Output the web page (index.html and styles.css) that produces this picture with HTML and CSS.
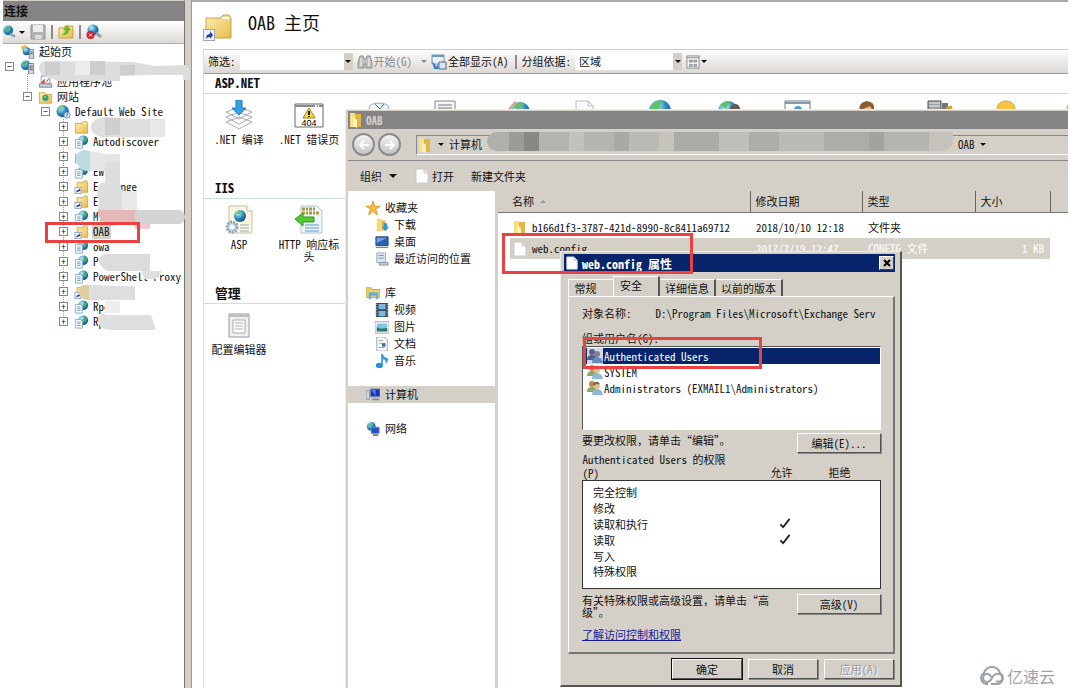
FILE: index.html
```html
<!DOCTYPE html>
<html lang="zh-CN">
<head>
<meta charset="utf-8">
<title>OAB 主页</title>
<link rel="stylesheet" href="styles.css">
</head>
<body>
<svg class="defs" aria-hidden="true">
  <defs>
    <linearGradient id="gold" x1="0" y1="0" x2="1" y2="1"><stop offset="0" stop-color="#fdeeb0"/><stop offset="1" stop-color="#e9bc4c"/></linearGradient>
    <radialGradient id="earth" cx=".35" cy=".3" r=".8"><stop offset="0" stop-color="#c5eefa"/><stop offset=".5" stop-color="#2e8fc4"/><stop offset="1" stop-color="#0f4478"/></radialGradient>
  </defs>
  <symbol id="folder" viewBox="0 0 16 16"><path d="M1 4h8l1-2h4l1 2v11H1z" fill="url(#gold)" stroke="#cda348"/><path d="M10 4h4" stroke="#fff"/></symbol>
  <symbol id="folder-link" viewBox="0 0 16 16"><path d="M3 3h7l1-2h3l1 2v11H3z" fill="url(#gold)" stroke="#cda348"/><rect x=".5" y="8.500" width="7" height="7" fill="#f2f4fb" stroke="#9aa3c0"/><path d="M2 14q0-3 3-3V9l2 3-2 1" fill="#2a3f9d"/></symbol>
  <symbol id="app" viewBox="0 0 16 16"><circle cx="10" cy="6" r="5.500" fill="url(#earth)"/><path d="M11 2l3 2-1 4-3-2z" fill="#48b558"/><path d="M1 5h6l2 2v8H1z" fill="#f4f9fc" stroke="#86a9bf"/><path d="M3 8h4M3 10h4M3 12h4" stroke="#6f9cc0"/></symbol>
  <symbol id="server" viewBox="0 0 16 16"><circle cx="6" cy="6" r="5.500" fill="url(#earth)"/><path d="M2 3l4-2 1 3-3 3z" fill="#48b558"/><path d="M9 4h6v12H9z" fill="#cdd5dc" stroke="#6f7d88"/><path d="M10 7h4M10 9h4M10 11h4" stroke="#506070"/></symbol>
  <symbol id="start" viewBox="0 0 16 16"><path d="M0 2l6-2 4 4v6H4z" fill="#e7c04d"/><circle cx="7" cy="7" r="4.500" fill="url(#earth)"/><path d="M10 5h5v11h-5z" fill="#cdd5dc" stroke="#6f7d88"/><path d="M11 8h3M11 10h3" stroke="#506070"/></symbol>
  <symbol id="pool" viewBox="0 0 16 16"><path d="M3 1h10v9H3z" fill="#f3f5fa" stroke="#8b93ab"/><path d="M1 10h14v4H1z" fill="#c7ccd8" stroke="#7d8494"/><path d="M3 9l4-5v5z" fill="#d33"/><path d="M9 8l3-4" stroke="#4a67b5"/></symbol>
  <symbol id="sites" viewBox="0 0 16 16"><path d="M1 3h6l1 2h7v10H1z" fill="url(#gold)" stroke="#cda348"/><circle cx="8" cy="9" r="3.500" fill="#2f9e77"/><path d="M6 8l2-2 1 3z" fill="#a8e07d"/></symbol>
  <symbol id="web" viewBox="0 0 16 16"><circle cx="7" cy="7" r="7" fill="url(#earth)"/><path d="M2 3q3-3 6-2l-2 4-3 2z" fill="#7bd08a"/><circle cx="12" cy="11.500" r="3.500" fill="#dfe9f6" stroke="#5c83b7"/><path d="M12 9v4" stroke="#3463a5"/></symbol>
  <symbol id="connect" viewBox="0 0 16 16"><circle cx="6" cy="6" r="5.500" fill="url(#earth)"/><path d="M2 4l4-3 1 4-3 2z" fill="#48b558"/><path d="M8 10l3 2 3 1" stroke="#8ca6b4" stroke-width="3" fill="none"/></symbol>
  <symbol id="stop" viewBox="0 0 16 16"><circle cx="7" cy="6" r="5.500" fill="url(#earth)"/><path d="M10 9l5 4" stroke="#8ca6b4" stroke-width="3"/><circle cx="4.500" cy="11" r="4" fill="#d3202c"/><path d="M3 9.500l3 3m0-3l-3 3" stroke="#fff"/></symbol>
  <symbol id="save" viewBox="0 0 16 16"><path d="M1 1h14v14H1z" fill="#b5b3b2" stroke="#94928f"/><path d="M3 1h10v7H3z" fill="#eeedec"/><path d="M5 11h7v4H5z" fill="#dddbd9"/></symbol>
  <symbol id="up" viewBox="0 0 16 16"><path d="M1 4h5l1-2h8v12H1z" fill="url(#gold)" stroke="#cda348"/><path d="M3 11q4-1 4-5H5l4-5 4 5h-2q0 6-8 5z" fill="#68b92f"/></symbol>
  <symbol id="exfolder" viewBox="0 0 16 16"><path d="M2 1h5v14H2z" fill="#f8df83"/><path d="M7 2h6v13H7z" fill="#e3b73f"/><path d="M5 5l4 3v8l-4-2z" fill="#fff3b9"/></symbol>
  <symbol id="page" viewBox="0 0 16 16"><path d="M2 1h8l4 4v10H2z" fill="#fff" stroke="#c5c9cf"/><path d="M10 1v4h4" fill="#e9ecef" stroke="#c5c9cf"/></symbol>
  <symbol id="bino" viewBox="0 0 16 16"><path d="M3 2h3l1 3h2l1-3h3l2 7v5H9v-4H7v4H1V9z" fill="#c2c0be" stroke="#8f8d8b"/><path d="M4 4v8M12 4v8" stroke="#f5f5f5"/></symbol>
  <symbol id="showall" viewBox="0 0 16 16"><path d="M1 1h12v9H1z" fill="#e9f2fa" stroke="#7195b8"/><path d="M1 2h12" stroke="#7195b8" stroke-width="2"/><path d="M8 8h7v7H8z" fill="#d7e7f5" stroke="#668"/><path d="M1 7l5 6V9l2 6H3z" fill="#2f83cc"/></symbol>
  <symbol id="grid" viewBox="0 0 16 16"><path d="M1 1h14v14H1z" fill="#f1f1f0" stroke="#85878a"/><path d="M1 3h14" stroke="#85878a"/><path d="M4 6h3v2H4zM9 6h3v2H9zM4 11h3v2H4zM9 11h3v2H9z" fill="#cfd5db" stroke="#7b8188"/></symbol>
  <symbol id="users" viewBox="0 0 16 16"><circle cx="5" cy="4" r="3" fill="#b98a50"/><path d="M0 12q0-5 5-5t5 5z" fill="#8bab62"/><circle cx="10" cy="6" r="3" fill="#e3bf8b"/><path d="M5 15q0-6 5-6t6 6z" fill="#8db9d9"/><path d="M7 5q2-4 5-1" stroke="#7d5a2f" stroke-width="2" fill="none"/></symbol>
  <symbol id="users-sel" viewBox="0 0 16 16"><path d="M0 0h16v16H0z" fill="#d4d8e4"/><circle cx="5" cy="4" r="3" fill="#596080"/><path d="M0 12q0-5 5-5t5 5z" fill="#4f6088"/><circle cx="10" cy="6" r="3" fill="#7e7f98"/><path d="M5 15q0-6 5-6t6 6z" fill="#6688c0"/></symbol>
</svg>

<main class="desktop">
  <aside class="connections">
    <h2 class="pane-title">连接</h2>
    <div class="pane-tools">
      <button class="tool" aria-label="连接到服务器"><svg class="i14"><use href="#connect"/></svg><i class="caret"></i></button>
      <button class="tool" aria-label="保存"><svg class="i16"><use href="#save"/></svg></button>
      <i class="bar"></i>
      <button class="tool" aria-label="向上"><svg class="i16"><use href="#up"/></svg></button>
      <i class="bar"></i>
      <button class="tool" aria-label="断开"><svg class="i16"><use href="#stop"/></svg></button>
    </div>
    <ul class="tree">
      <li class="row"><i class="leaf"></i><svg class="tree-icon"><use href="#start"/></svg><span>起始页</span></li>
      <li><div class="row"><i class="box">−</i><svg class="tree-icon"><use href="#server"/></svg><span></span></div>
        <ul class="level1">
          <li class="row"><i class="leaf"></i><svg class="tree-icon"><use href="#pool"/></svg><span>应用程序池</span></li>
          <li><div class="row"><i class="box">−</i><svg class="tree-icon"><use href="#sites"/></svg><span>网站</span></div>
            <ul class="level2">
              <li><div class="row"><i class="box">−</i><svg class="tree-icon"><use href="#web"/></svg><span>Default Web Site</span></div>
                <ul class="level3">
                  <li class="row"><i class="box">+</i><svg class="tree-icon"><use href="#folder"/></svg></li>
                  <li class="row"><i class="box">+</i><svg class="tree-icon"><use href="#app"/></svg><span>Autodiscover</span></li>
                  <li class="row"><i class="box">+</i><svg class="tree-icon"><use href="#app"/></svg></li>
                  <li class="row"><i class="box">+</i><svg class="tree-icon"><use href="#app"/></svg><span>EW</span></li>
                  <li class="row"><i class="box">+</i><svg class="tree-icon"><use href="#folder-link"/></svg><span>Exchange</span></li>
                  <li class="row"><i class="box">+</i><svg class="tree-icon"><use href="#folder-link"/></svg><span>Ex</span></li>
                  <li class="row"><i class="box">+</i><svg class="tree-icon"><use href="#app"/></svg><span>Mi</span></li>
                  <li class="row"><i class="box">+</i><svg class="tree-icon"><use href="#folder-link"/></svg><span class="current">OAB</span></li>
                  <li class="row"><i class="box">+</i><svg class="tree-icon"><use href="#app"/></svg><span>owa</span></li>
                  <li class="row"><i class="box">+</i><svg class="tree-icon"><use href="#app"/></svg><span>P</span></li>
                  <li class="row"><i class="box">+</i><svg class="tree-icon"><use href="#app"/></svg><span>PowerShell-Proxy</span></li>
                  <li class="row"><i class="box">+</i><svg class="tree-icon"><use href="#folder-link"/></svg></li>
                  <li class="row"><i class="box">+</i><svg class="tree-icon"><use href="#app"/></svg><span>Rpc</span></li>
                  <li class="row"><i class="box">+</i><svg class="tree-icon"><use href="#app"/></svg><span>Rp</span></li>
                </ul>
              </li>
            </ul>
          </li>
        </ul>
      </li>
    </ul>
  </aside>
  <div class="splitter"></div>

  <section class="home">
    <header class="home-head">
      <svg class="i30" viewBox="0 0 30 30"><path d="M3 5h15l2-3h6l2 3v20H3z" fill="url(#gold)" stroke="#cda348"/><path d="M19 5h7" stroke="#fff" stroke-width="2"/><rect x=".5" y="16.500" width="11" height="11" fill="#f2f4fb" stroke="#9aa3c0"/><path d="M3 26q0-5 4-5v-3l3 4-3 4v-2q-3 0-4 2z" fill="#2a3f9d"/></svg>
      <h1>OAB 主页</h1>
    </header>
    <div class="home-body">
      <div class="filter">
        <label for="filter">筛选:</label>
        <span class="combo"><input id="filter" type="text"><button class="drop" aria-label="展开"><i class="caret"></i></button></span>
        <button class="tool muted"><svg class="i16"><use href="#bino"/></svg>开始(G)<i class="caret spaced"></i></button>
        <button class="tool"><svg class="i16"><use href="#showall"/></svg>全部显示(A)</button>
        <i class="bar"></i>
        <label for="group">分组依据:</label>
        <span class="combo group-combo"><select id="group"><option>区域</option></select><i class="drop"><i class="caret"></i></i></span>
        <button class="tool" aria-label="视图"><svg class="i14"><use href="#grid"/></svg><i class="caret"></i></button>
      </div>

      <section class="group">
        <h3>ASP.NET</h3>
        <div class="tiles">
          <a class="tile" href="#"><svg class="i30" viewBox="0 0 30 30"><path d="M2 22l13-5 13 5-13 7zM2 17l13-5 13 5-13 7zM2 12l13-5 13 5-13 7z" fill="#fbfcfd" stroke="#a9adb3"/><path d="M12 0h6v8h4l-7 7-7-7h4z" fill="#36a0e8" stroke="#1d78bd"/></svg>.NET 编译</a>
          <a class="tile" href="#"><svg class="i30" viewBox="0 0 30 30"><path d="M1 4h28v23H1z" fill="#fff" stroke="#666"/><path d="M1 6h28" stroke="#889" stroke-width="2" stroke-dasharray="20 2 1 1"/><path d="M15 8l6 10H9z" fill="#fbd928" stroke="#9c8416"/><path d="M15 11v4m0 1v1" stroke="#222" stroke-width="2"/><text x="15" y="26" text-anchor="middle" class="code404">404</text></svg>.NET 错误页</a>
          <a class="tile" href="#"><svg class="i30" viewBox="0 0 30 30"><path d="M5 9q0-6 10-6t10 6v15H5z" fill="#eef4f8" stroke="#8fa6b8"/><path d="M11 4l5 5 4-5" fill="none" stroke="#58758c"/></svg></a>
          <a class="tile" href="#"><svg class="i30" viewBox="0 0 30 30"><path d="M1 1h20v27H1z" fill="#f5f5f6" stroke="#888"/><path d="M4 5h14M4 8h14" stroke="#777"/></svg></a>
          <a class="tile" href="#"><svg class="i30" viewBox="0 0 30 30"><circle cx="16" cy="12" r="10" fill="url(#earth)"/><path d="M8 6q6-6 12-2l-5 7z" fill="#68bd6f"/><path d="M5 10L12 2" stroke="#d4a6a2" stroke-width="3"/></svg></a>
          <a class="tile" href="#"><svg class="i30" viewBox="0 0 30 30"><path d="M2 1h12l5 5v22H2z" fill="#fafafa" stroke="#bbb"/><path d="M14 1v5h5" fill="none" stroke="#bbb"/></svg></a>
          <a class="tile" href="#"><svg class="i30" viewBox="0 0 30 30"><circle cx="16" cy="11" r="11" fill="url(#earth)"/><path d="M7 6q5-6 11-5l-3 8-6 2z" fill="#60c45c"/></svg></a>
          <a class="tile" href="#"><svg class="i30" viewBox="0 0 30 30"><circle cx="14" cy="11" r="10" fill="url(#earth)"/><path d="M6 5q5-5 9-3l-3 7z" fill="#60c45c"/><circle cx="21" cy="9" r="5" fill="#645854"/></svg></a>
          <a class="tile" href="#"><svg class="i30" viewBox="0 0 30 30"><path d="M1 1h25v20H1z" fill="#fff" stroke="#678"/><path d="M1 3h25" stroke="#89a" stroke-width="2"/><circle cx="14" cy="10" r="4" fill="#4c9dd0"/></svg></a>
          <a class="tile" href="#"><svg class="i30" viewBox="0 0 30 30"><path d="M5 10q0-8 8-9 8 1 7 8z" fill="#8c5d33"/><path d="M9 9l7-3 4 6H9z" fill="#e7bc8c"/></svg></a>
          <a class="tile" href="#"><svg class="i30" viewBox="0 0 30 30"><path d="M4 1h13v20H4z" fill="#9da3a8" stroke="#555"/><path d="M5 3h11M5 6h11" stroke="#eee"/><path d="M18 3h6v8h-6z" fill="#777"/><path d="M22 9l6-2" stroke="#cf9f36" stroke-width="3"/></svg></a>
          <a class="tile" href="#"><svg class="i30" viewBox="0 0 30 30"><ellipse cx="12" cy="8" rx="9" ry="7" fill="#f7c545" stroke="#dba42e"/></svg></a>
          <a class="tile" href="#"><svg class="i30" viewBox="0 0 30 30"><ellipse cx="12" cy="8" rx="9" ry="7" fill="#f7c545" stroke="#dba42e"/></svg></a>
        </div>
      </section>
      <section class="group">
        <h3>IIS</h3>
        <div class="tiles">
          <a class="tile" href="#"><svg class="i30" viewBox="0 0 30 30"><path d="M5 1h18l5 5v22H5z" fill="#fcf6df" stroke="#c5c0a8"/><path d="M23 1v5h5" fill="#fff" stroke="#bbb"/><circle cx="16" cy="11" r="6" fill="url(#earth)"/><path d="M12 8l4-2 1 4z" fill="#6ac464"/><path d="M16 20h9M16 23h9M16 26h9" stroke="#9ba8ba"/><circle cx="8" cy="22" r="5" fill="#d3dee9" stroke="#8ba3b9" stroke-width="3" stroke-dasharray="2 1"/><circle cx="8" cy="22" r="2" fill="#fff"/></svg>ASP</a>
          <a class="tile" href="#"><svg class="i30" viewBox="0 0 30 30"><path d="M7 1h16l5 5v22H7z" fill="#eef6fa" stroke="#b3c2cc"/><path d="M8 4h14M8 8h18" stroke="#a99848" stroke-width="3" stroke-dasharray="3 1 2 1"/><path d="M11 20h14M11 23h14M11 26h14" stroke="#5796cf"/><path d="M1 14l8-6v4h11v5H9v4z" fill="#56c832" stroke="#319b1c"/></svg>HTTP 响应标头</a>
        </div>
      </section>
      <section class="group">
        <h3>管理</h3>
        <div class="tiles">
          <a class="tile" href="#"><svg class="i30" viewBox="0 0 30 30"><path d="M5 4h20v23H5z" fill="#eef0f2" stroke="#95999e"/><path d="M6 6h18" stroke="#bcc0c5" stroke-width="2"/><path d="M9 10h12v13H9z" fill="#fff" stroke="#a6abb0"/><path d="M11 13h8M11 16h8M11 19h8" stroke="#a1b0bd"/></svg>配置编辑器</a>
        </div>
      </section>
    </div>
  </section>

  <section class="explorer">
    <header class="ex-title"><svg class="i16"><use href="#exfolder"/></svg><span>OAB</span></header>
    <nav class="ex-nav">
      <button class="round" aria-label="后退"><svg class="i14" viewBox="0 0 14 14"><path d="M12 7H3m4-4L3 7l4 4" fill="none" stroke="#fff" stroke-width="2"/></svg></button>
      <button class="round" aria-label="前进"><svg class="i14" viewBox="0 0 14 14"><path d="M2 7h9M7 3l4 4-4 4" fill="none" stroke="#fff" stroke-width="2"/></svg></button>
      <div class="address">
        <svg class="i16"><use href="#exfolder"/></svg><i class="caret"></i><a href="#">计算机</a><span class="mosaic"></span><a href="#">OAB</a><i class="caret"></i>
      </div>
    </nav>
    <div class="ex-tools">
      <button class="tool">组织<i class="caret big"></i></button>
      <button class="tool open"><svg class="i16"><use href="#page"/></svg>打开</button>
      <button class="tool">新建文件夹</button>
    </div>
    <div class="ex-body">
      <ul class="places">
        <li><svg class="i14" viewBox="0 0 16 16"><path d="M8 0l2 6h6l-5 3 2 7-5-4-5 4 2-7-5-3h6z" fill="#fbbd42" stroke="#df9322"/></svg>收藏夹</li>
        <li class="sub"><svg class="i14" viewBox="0 0 16 16"><path d="M2 1h6v14H2z" fill="#f6da76"/><path d="M8 3h4v11H8z" fill="#dfb041"/><path d="M10 6h4v4h2l-4 5-4-5h2z" fill="#2f93d8"/></svg>下载</li>
        <li class="sub"><svg class="i14" viewBox="0 0 16 16"><path d="M1 2h14v10H1z" fill="#2761b4" stroke="#31456b"/><path d="M2 3h12L2 9z" fill="#6ea5e0"/><path d="M1 14h14" stroke="#444"/></svg>桌面</li>
        <li class="sub"><svg class="i14" viewBox="0 0 16 16"><path d="M2 1h10v11H2z" fill="#dbe8f1" stroke="#92a6b5"/><path d="M4 4h6M4 7h6" stroke="#6d91ae"/><path d="M5 12h10v3H5z" fill="#bfccd7" stroke="#8598a6"/></svg>最近访问的位置</li>
        <li class="gap"></li>
        <li><svg class="i14" viewBox="0 0 16 16"><path d="M0 2h6l1 2h9v9H0z" fill="#f2cf67" stroke="#c79f3f"/><path d="M3 7h11v8h-3v-4H6v4H3z" fill="#68b1dd"/></svg>库</li>
        <li class="sub"><svg class="i14" viewBox="0 0 16 16"><path d="M1 0h14v16H1z" fill="#334b60"/><path d="M4 1h8v6H4zM4 9h8v6H4z" fill="#7fb7df"/><path d="M2 1v14M14 1v14" stroke="#fff" stroke-dasharray="1 2"/></svg>视频</li>
        <li class="sub"><svg class="i14" viewBox="0 0 16 16"><path d="M0 2h16v13H0z" fill="#fff" stroke="#8c9ba8"/><path d="M2 4h12v9H2z" fill="#7cc6e8"/><path d="M2 13V8l4 2 8-1v4z" fill="#287a65"/></svg>图片</li>
        <li class="sub"><svg class="i14" viewBox="0 0 16 16"><path d="M2 0h9l3 3v13H2z" fill="#fff" stroke="#8e9caa"/><path d="M4 4h5M4 7h4M4 12h7" stroke="#7b9bbb"/><path d="M8 7h4v4H8z" fill="#386ba0"/></svg>文档</li>
        <li class="sub"><svg class="i14" viewBox="0 0 16 16"><path d="M7 13V0h2q1 4 6 5 0 5-3 6 1-4-3-5v7z" fill="#3da0de"/><ellipse cx="5" cy="13" rx="4" ry="3" fill="#2990d5"/></svg>音乐</li>
        <li class="gap"></li>
        <li class="picked"><svg class="i14" viewBox="0 0 16 16"><path d="M5 1h11v9H5z" fill="#1634b3" stroke="#8292ae"/><path d="M6 2h5v7z" fill="#577ce3"/><path d="M0 3h4v10H0z" fill="#ccd2da" stroke="#8b929e"/><path d="M7 13h8" stroke="#888" stroke-width="2"/></svg>计算机</li>
        <li class="gap"></li>
        <li><svg class="i14" viewBox="0 0 16 16"><circle cx="6" cy="5" r="5" fill="url(#earth)"/><path d="M2 3l4-2 1 4z" fill="#53bd62"/><path d="M6 6h9v7H6z" fill="#2550c8" stroke="#768aa8"/><path d="M8 15h6" stroke="#777" stroke-width="2"/></svg>网络</li>
      </ul>
      <div class="files">
        <table>
          <colgroup><col class="c-name"><col class="c-date"><col class="c-type"><col class="c-size"><col></colgroup>
          <thead><tr><th>名称<i class="caret asc"></i></th><th>修改日期</th><th>类型</th><th>大小</th><th></th></tr></thead>
          <tbody>
            <tr><td><span class="file"><svg class="i16"><use href="#exfolder"/></svg>b166d1f3-3787-421d-8990-8c8411a69712</span></td><td>2018/10/10 12:18</td><td>文件夹</td><td></td><td></td></tr>
            <tr class="chosen"><td><span class="file"><svg class="i16"><use href="#page"/></svg>web.config</span></td><td>2017/7/19 12:47</td><td>CONFIG 文件</td><td class="size">1 KB</td><td></td></tr>
          </tbody>
        </table>
      </div>
    </div>
  </section>

  <section class="dialog">
    <header class="dlg-title"><svg class="i14"><use href="#page"/></svg><h2>web.config 属性</h2><button class="close" aria-label="关闭"><svg viewBox="0 0 8 8"><path d="M1 1l6 6M7 1L1 7" stroke="#000" stroke-width="2"/></svg></button></header>
    <div class="tabs"><button>常规</button><button class="active">安全</button><button>详细信息</button><button>以前的版本</button></div>
    <div class="sheet">
      <p class="object"><span>对象名称:</span><span>D:\Program Files\Microsoft\Exchange Serv</span></p>
      <p class="list-label">组或用户名(G):</p>
      <ul class="principals">
        <li class="sel"><svg class="i16"><use href="#users-sel"/></svg><span>Authenticated Users</span></li>
        <li><svg class="i16"><use href="#users"/></svg><span>SYSTEM</span></li>
        <li><svg class="i16"><use href="#users"/></svg><span>Administrators (EXMAIL1\Administrators)</span></li>
      </ul>
      <div class="line"><span>要更改权限，请单击“编辑”。</span><button class="btn wide">编辑(E)...</button></div>
      <table class="perms">
        <colgroup><col><col class="c-allow"><col class="c-deny"></colgroup>
        <thead><tr><th>Authenticated Users 的权限<br>(P)</th><th>允许</th><th>拒绝</th></tr></thead>
        <tbody>
          <tr><td>完全控制</td><td></td><td></td></tr>
          <tr><td>修改</td><td></td><td></td></tr>
          <tr><td>读取和执行</td><td><svg class="tick" viewBox="0 0 12 12"><path d="M1 7l3 3 7-9" fill="none" stroke="#222" stroke-width="2"/></svg></td><td></td></tr>
          <tr><td>读取</td><td><svg class="tick" viewBox="0 0 12 12"><path d="M1 7l3 3 7-9" fill="none" stroke="#222" stroke-width="2"/></svg></td><td></td></tr>
          <tr><td>写入</td><td></td><td></td></tr>
          <tr><td>特殊权限</td><td></td><td></td></tr>
        </tbody>
      </table>
      <div class="line advanced"><span>有关特殊权限或高级设置，请单击“高级”。</span><button class="btn wide">高级(V)</button></div>
      <a class="learn" href="#">了解访问控制和权限</a>
    </div>
    <footer><button class="btn default">确定</button><button class="btn">取消</button><button class="btn" disabled>应用(A)</button></footer>
  </section>

  <svg class="smudges" viewBox="0 0 200 340" aria-hidden="true">
    <path d="M39 68q1-7 8-7l85 1 24 4 30-1q4 1 4 9v6h-7v-5h-33l-30 1v5H58l-12-5q-7-2-7-8z" fill="#dedddd"/>
    <path d="M45 62h15v13H45zM90 61h15v14H90zM120 65h15v10h-15z" fill="#cfcece"/><path d="M75 61h15v14H75z" fill="#ececec"/>
    <path d="M91 127q0-8 14-10l30 2h30v18h-60q-14-1-14-10z" fill="#dedede"/><path d="M105 118h15v17h-15z" fill="#cfcfcf"/><path d="M150 120h15v17h-15z" fill="#e8e8e8"/>
    <path d="M76 160q-1-8 8-10l22 4h14v17H90q-13-1-14-11z" fill="#e5e5e5"/><path d="M76 160q-1-8 8-10l6 1v21q-12-3-14-12z" fill="#bddade"/>
    <path d="M105 162h15v21h-15z" fill="#dedddd"/><path d="M98 186q3-4 7-3h15l2 8h15v19H97q4-8 0-14z" fill="#dedddd"/><path d="M122 191h15v19h-15z" fill="#e9e9e9"/>
    <path d="M98 210h82q5 2 5 7t-5 7h-55l-15 2q-12-4-12-16z" fill="#d5d4d4"/><path d="M98 210h37v14h-25q-12-2-12-14z" fill="#e4b7b9"/><path d="M135 224h15v5h-15z" fill="#f2c8ca"/>
    <path d="M99 260q1-6 8-6h43v17h-42q-9-4-9-11z" fill="#dcdcdc"/><path d="M142 271h20l-6 8h-12z" fill="#dfdfdf"/>
    <path d="M79 292q0-9 10-7l30 1h16v14H90q-11-1-11-8z" fill="#dfdede"/><path d="M79 292q0-9 10-7v15q-10-1-10-8z" fill="#dfcfa1"/>
    <path d="M98 320q0-7 7-7v2h46l5 15h-46q-12-1-12-10z" fill="#dfdfdf"/><path d="M105 301h15v12h-15z" fill="#eee"/>
  </svg>
  <div class="mark mark-tree"></div>
  <div class="mark mark-file"></div>
  <div class="mark mark-user"></div>
  <div class="brand"><svg viewBox="0 0 26 20"><path d="M12 11a4 4 0 1 0-4 5q3 0 5-4 2-4 5-4a4 4 0 1 1-1 7" fill="none" stroke="#9ba1aa" stroke-width="2"/><path d="M9 18H7A6 6 0 0 1 5 7Q7 1 13 1t8 6a6 6 0 0 1-2 11h-7" fill="none" stroke="#9ba1aa" stroke-width="2"/></svg><span>亿速云</span></div>
</main>
</body>
</html>
```
FILE: styles.css
```css
* { box-sizing: border-box; }
body {
  margin: 0;
  background: #fff;
  color: #111;
  font: 11px/15px "Noto Sans Mono CJK SC", "Liberation Mono", "Noto Sans CJK SC", monospace;
}
h1, h2, h3, p, ul { margin: 0; padding: 0; font-weight: normal; }
ul { list-style: none; }
i { font-style: normal; }
svg { flex: none; display: block; }
button, input, select { font: inherit; color: inherit; margin: 0; padding: 0; border: 0; background: none; }
table { border-collapse: collapse; table-layout: fixed; width: 100%; }
th { font-weight: normal; text-align: left; }
.defs { position: absolute; width: 0; height: 0; }
.i14 { width: 14px; height: 14px; }
.i16 { width: 16px; height: 16px; }
.i30 { width: 30px; height: 30px; }

.desktop {
  position: relative;
  display: grid;
  grid-template-columns: 182px 7px 1fr;
  min-height: 100vh;
  padding: 0 3px;
  overflow: hidden;
}
.caret { flex: none; width: 0; height: 0; border: 3px solid transparent; border-top-color: #111; border-bottom: 0; }
.caret.big { border-width: 4px 4px 0; }
.caret.asc { border: 3px solid transparent; border-bottom-color: #999; border-top: 0; }
.bar { flex: none; width: 2px; height: 14px; background: #8d8a87; }
.tool { display: flex; align-items: center; gap: 2px; white-space: nowrap; }

/* Connections pane */
.connections { border-top: 1px solid #d4d0c8; border-right: 1px solid #777; }
.pane-title { height: 20px; padding-left: 1px; background: #858585; font-weight: bold; font-size: 12px; line-height: 20px; }
.pane-tools { display: flex; align-items: center; gap: 5px; height: 23px; border-bottom: 1px solid #aaa; background: linear-gradient(#fff, #dedad6); }
.row { display: flex; align-items: center; height: 15px; padding-left: 2px; white-space: nowrap; }
.row span { padding: 0 1px; }
.box { width: 9px; height: 9px; flex: none; border: 1px solid #888; background: #fff; font-size: 9px; line-height: 7px; text-align: center; }
.leaf { width: 9px; flex: none; height: 1px; }
.tree-icon { width: 15px; height: 14px; margin: 0 3px 0 6px; }
.level1 .row { padding-left: 20px; }
.level2 .row { padding-left: 38px; }
.level3 .row { padding-left: 56px; }
.level1, .level3 { background: repeating-linear-gradient(#999 0 1px, #fff 1px 2px) 24px 0 / 1px 23px no-repeat; }
.level3 { background-position: 60px 0; background-size: 1px 200px; }
.row .current { background: #d4d0c8; }
.splitter { border-right: 1px solid #999; background: #d4d0c8; }

/* Feature view */
.home { display: flex; flex-direction: column; min-width: 0; padding-left: 11px; border-top: 2px solid #aaa; }
.home-head { display: flex; align-items: center; gap: 15px; height: 47px; padding-top: 4px; }
.home-head h1 { font-size: 18px; line-height: 24px; padding-bottom: 12px; }
.home-body { flex: 1; border-left: 1px solid #ddd; }
.filter { display: flex; align-items: center; gap: 4px; height: 25px; padding-left: 4px; border-top: 1px solid #ccc; border-bottom: 1px solid #999; background: linear-gradient(#fdfdfc, #dcd8d4); }
.filter .tool { gap: 1px; }
.filter .bar { margin: 0 1px 0 2px; }
.combo { display: flex; width: 113px; height: 17px; background: #fff; }
.combo input, .combo select { flex: 1; min-width: 0; appearance: none; padding-left: 4px; }
.group-combo { width: 107px; }
.drop { display: flex; width: 9px; flex: none; align-items: center; justify-content: center; background: #d4d0c8; }
.muted { color: #888; }
.muted .caret { border-top-color: #888; }
.spaced { margin: 0 0 0 8px; }
.group h3 { height: 20px; padding-left: 11px; border-bottom: 1px solid #cbdde8; font-weight: bold; line-height: 17px; }
.tiles { display: flex; height: 85px; padding-top: 6px; overflow: hidden; }
.tile { display: flex; flex: none; flex-direction: column; align-items: center; gap: 3px; width: 70px; color: inherit; line-height: 12px; text-align: center; text-decoration: none; }
.code404 { font: 9px "Liberation Sans", sans-serif; }

/* Explorer window */
.explorer { position: absolute; left: 345px; top: 109px; right: 3px; bottom: 0; display: flex; flex-direction: column; padding: 1px 0 0 2px; border: 1px solid #eee; border-right: 0; border-bottom: 0; background: #d4d0c8; }
.ex-title { display: flex; align-items: center; gap: 2px; height: 18px; background: #848484; color: #d4d0c8; font-weight: bold; }
.ex-nav { display: flex; align-items: center; gap: 3px; height: 32px; padding-left: 4px; border-bottom: 1px solid #888; }
.round { display: grid; place-items: center; width: 23px; height: 23px; border: 2px solid #8b8b8b; border-radius: 50%; background: linear-gradient(#f2f2f2, #c4c4c4); }
.address { display: flex; flex: 1; align-items: center; gap: 5px; height: 20px; margin-left: 12px; border: 1px solid #888; border-right: 0; border-bottom-color: #fff; }
.address a { color: inherit; text-decoration: none; }
.mosaic { flex: 0 1 466px; height: 19px; margin-bottom: 6px; border-radius: 10px 4px 12px 10px; background: linear-gradient(90deg, #b0afaa 0 22px, #9b9b97 22px 37px, #888985 37px 52px, #b4b3ae 52px 82px, #c3c1bb 82px 97px, #b5b4af 97px 127px, #aaa9a5 127px 142px, #bbb9b4 142px 172px, #c5c3bc 172px 187px, #acaba7 187px 232px, #c0beb8 232px 262px, #adada9 262px 292px, #bbbab5 292px 337px, #adaca8 337px 382px, #a3a29f 382px 397px, #b5b4af 397px 442px, #c4c2bb 442px); }
.ex-tools { display: flex; align-items: center; gap: 17px; height: 30px; padding-left: 12px; }
.ex-tools .caret { margin-left: 5px; }
.ex-body { display: grid; grid-template-columns: 147px 1fr; gap: 3px; flex: 1; }
.places { padding-top: 8px; background: #fff; }
.places li { display: flex; align-items: center; gap: 5px; height: 17px; padding-left: 18px; }
.places .sub { padding-left: 27px; }
.places .picked { background: #d4d0c8; }
.files { min-width: 0; background: #fff; }
.c-name { width: 252px; }
.c-date { width: 112px; }
.c-type { width: 113px; }
.c-size { width: 75px; }
.files th { height: 21px; padding: 0 5px; border-right: 1px solid #666; border-bottom: 1px solid #777; background: #d4d0c8; }
.files th:first-child { padding-left: 14px; }
.files th:last-child { border-right: 0; }
.files th .caret { display: inline-block; margin: 0 0 3px 6px; }
.files td { height: 21px; padding: 0 6px; white-space: nowrap; }
.files tbody tr:first-child td { height: 26px; padding-top: 5px; }
.files td:first-child { padding-left: 14px; }
.file { display: flex; align-items: center; gap: 4px; }
.chosen td { background: #d4d0c8; color: #fff; }
.chosen td:first-child { background: linear-gradient(90deg, #fff 12px, #d4d0c8 12px); color: #111; }
.chosen td:last-child { background: #fff; }
.chosen .size { text-align: right; }

/* Properties dialog */
.dialog { position: absolute; left: 560px; top: 251px; width: 342px; padding: 2px 5px 6px 3px; border: 1px solid #eee; border-right: 2px solid #555; border-bottom: 2px solid #555; background: #d4d0c8; }
.dlg-title { display: flex; align-items: center; gap: 3px; height: 18px; padding: 0 1px; background: #08246b; color: #fff; }
.dlg-title h2 { flex: 1; font-size: 12px; font-weight: bold; }
.close { display: grid; place-items: center; width: 15px; height: 14px; border: 1px solid; border-color: #fff #444 #444 #fff; background: #d4d0c8; }
.close svg { width: 8px; height: 8px; }
.tabs { display: flex; align-items: flex-end; height: 24px; padding-left: 4px; }
.tabs button { height: 17px; padding: 0 5px; border: 1px solid #fff; border-right: 2px solid #555; border-bottom: 0; border-left: 0; }
.tabs button:first-child { width: 45px; padding-right: 16px; border-right: 0; border-left: 1px solid #fff; }
.tabs .active { width: 47px; height: 20px; padding: 0 15px 3px 5px; border-left: 1px solid #fff; white-space: nowrap; }
.sheet { margin-left: 4px; padding: 9px 12px 10px 13px; border: 1px solid #fff; border-right: 2px solid #777; border-bottom: 2px solid #777; }
.object { display: flex; gap: 24px; white-space: nowrap; }
.list-label { padding-top: 10px; }
.principals { height: 84px; padding-top: 1px; border: 1px solid; border-color: #555 #fff #fff #555; background: #fff; }
.principals li { display: flex; align-items: center; gap: 1px; height: 16px; padding-left: 4px; }
.principals .sel { background: #08246b; color: #fff; }
.line { display: flex; justify-content: space-between; align-items: flex-start; height: 22px; padding-top: 3px; line-height: 15px; }
.btn { width: 70px; height: 20px; border: 1px solid; border-color: #fff #555 #555 #fff; box-shadow: 1px 1px 0 #888; line-height: 16px; }
.wide { flex: none; width: 84px; }
.c-allow { width: 58px; }
.c-deny { width: 52px; }
.perms { line-height: 12px; }
.perms th { height: 28px; padding: 0 0 2px; vertical-align: bottom; white-space: nowrap; }
.perms th:first-child { padding: 0; line-height: 14px; }
.perms tbody { border: 1px solid #333; background: #fff; }
.perms td { height: 16px; padding: 0 8px; }
.perms td:first-child { padding-left: 10px; }
.perms tr:first-child td { height: 19px; padding-top: 3px; }
.perms tr:last-child td { height: 25px; padding-bottom: 9px; }
.tick { width: 12px; height: 11px; }
.advanced { height: 38px; padding-top: 5px; line-height: 12px; }
.advanced span { width: 200px; }
.learn { color: #1a1a9c; }
footer { display: flex; justify-content: flex-end; gap: 6px; padding: 5px 1px 0; }
.default { outline: 1px solid #111; }
.btn:disabled { color: #999; text-shadow: 1px 1px #fff; }

/* Redactions, highlights and brand */
.smudges { position: absolute; left: 0; top: 0; width: 200px; height: 340px; pointer-events: none; }
.mark { position: absolute; border: 3px solid #eb4143; pointer-events: none; }
.mark-tree { left: 45px; top: 222px; width: 95px; height: 21px; }
.mark-file { left: 502px; top: 233px; width: 191px; height: 41px; }
.mark-user { left: 583px; top: 337px; width: 179px; height: 32px; }
.brand { position: absolute; right: 16px; bottom: 2px; display: flex; align-items: center; gap: 2px; color: #9ba1aa; font-size: 16px; line-height: 20px; }
.brand svg { width: 26px; height: 20px; }
```
